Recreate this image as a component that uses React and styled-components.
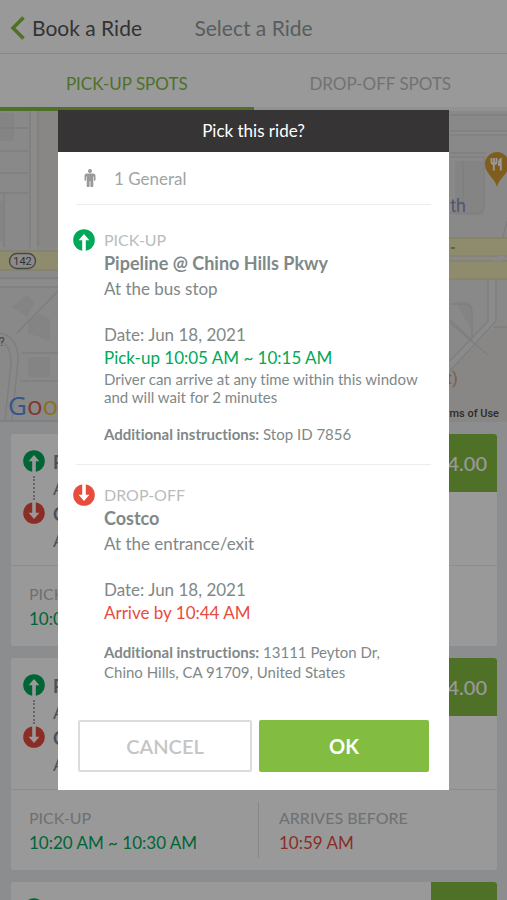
import React from 'react';
import styled, { createGlobalStyle } from 'styled-components';

const rides = [
  { id: 1, pickup: '10:05 AM ~ 10:15 AM', arrives: '10:44 AM' },
  { id: 2, pickup: '10:20 AM ~ 10:30 AM', arrives: '10:59 AM' },
  { id: 3, pickup: '10:35 AM ~ 10:45 AM', arrives: '11:14 AM' },
];

const App = () => {
  return (
    <>
      <GlobalStyle />
      <Page>
        <Header>
          <BackLink href='#book'>
            <ChevronIcon />
            Book a Ride
          </BackLink>
          <PageTitle>Select a Ride</PageTitle>
        </Header>
        <Tabs>
          <Tab type='button' $active>
            PICK-UP SPOTS
          </Tab>
          <Tab type='button'>DROP-OFF SPOTS</Tab>
        </Tabs>
        <Map />
        <RideList>
          {rides.map((ride) => (
            <RideCard key={ride.id} ride={ride} />
          ))}
        </RideList>
      </Page>
      <Overlay>
        <ConfirmDialog />
      </Overlay>
    </>
  );
};

const RideCard = ({ ride }) => (
  <StyleCard>
    <Route>
      <RouteIcons>
        <UpIcon />
        <Dots />
        <DownIcon />
      </RouteIcons>
      <RouteText>
        <strong>Pipeline @ Chino Hills Pkwy</strong>
        <span>At the bus stop</span>
        <strong>Costco</strong>
        <span>At the entrance/exit</span>
      </RouteText>
      <Price>$4.00</Price>
    </Route>
    <Times>
      <TimeCell>
        <CardLabel>PICK-UP</CardLabel>
        <Time $color='#00a859'>{ride.pickup}</Time>
      </TimeCell>
      <TimeCell>
        <CardLabel>ARRIVES BEFORE</CardLabel>
        <Time $color='#e74c3c'>{ride.arrives}</Time>
      </TimeCell>
    </Times>
  </StyleCard>
);

const ConfirmDialog = () => (
  <Dialog role='dialog' aria-modal='true' aria-labelledby='dialog-title'>
    <DialogTitle id='dialog-title'>Pick this ride?</DialogTitle>
    <DialogBody>
      <Passengers>
        <ManIcon />
        1 General
      </Passengers>
      <Divider />
      <Stop>
        <UpIcon />
        <div>
          <Label>PICK-UP</Label>
          <StopName>Pipeline @ Chino Hills Pkwy</StopName>
          <Place>At the bus stop</Place>
          <DateLine>Date: Jun 18, 2021</DateLine>
          <StopTime $color='#00a859'>Pick-up 10:05 AM ~ 10:15 AM</StopTime>
          <Note>
            Driver can arrive at any time within this window and will wait for 2
            minutes
          </Note>
          <Instructions>
            <strong>Additional instructions:</strong> Stop ID 7856
          </Instructions>
        </div>
      </Stop>
      <Divider />
      <Stop>
        <DownIcon />
        <div>
          <Label>DROP-OFF</Label>
          <StopName>Costco</StopName>
          <Place>At the entrance/exit</Place>
          <DateLine>Date: Jun 18, 2021</DateLine>
          <StopTime $color='#e74c3c'>Arrive by 10:44 AM</StopTime>
          <Instructions>
            <strong>Additional instructions:</strong> 13111 Peyton Dr, Chino
            Hills, CA 91709, United States
          </Instructions>
        </div>
      </Stop>
    </DialogBody>
    <Actions>
      <Button type='button'>CANCEL</Button>
      <Button type='button' $primary>
        OK
      </Button>
    </Actions>
  </Dialog>
);

// Icons
const ChevronIcon = () => (
  <svg width='16' height='24' viewBox='0 0 16 24' aria-hidden='true'>
    <path d='M13.5 1.5L3 12l10.5 10.5' fill='none' stroke='#82bc41' strokeWidth='3.6' />
  </svg>
);

const UpIcon = () => (
  <svg width='22' height='22' viewBox='0 0 22 22' aria-hidden='true'>
    <circle cx='11' cy='11' r='10.8' fill='#00a859' />
    <path d='M11 5l5.4 6.2h-3.6V22H9.2V11.2H5.6z' fill='#fff' />
  </svg>
);

const DownIcon = () => (
  <svg width='22' height='22' viewBox='0 0 22 22' aria-hidden='true'>
    <circle cx='11' cy='11' r='10.8' fill='#e74c3c' />
    <path d='M11 17l5.4-6.2h-3.6V0H9.2v10.8H5.6z' fill='#fff' />
  </svg>
);

const ManIcon = () => (
  <svg width='12' height='18' viewBox='0 0 12 18' fill='#999' aria-hidden='true'>
    <circle cx='6' cy='2' r='2' />
    <path d='M3 4.5h6a2.5 2.5 0 0 1 2.5 2.5v4a.8.8 0 0 1-1.6 0V7.5h-.6V17a.9.9 0 0 1-.9.9H7.3a.9.9 0 0 1-.9-.9v-5h-.8v5a.9.9 0 0 1-.9.9H3.6a.9.9 0 0 1-.9-.9V7.5h-.6V11a.8.8 0 0 1-1.6 0V7A2.5 2.5 0 0 1 3 4.5z' />
  </svg>
);

const Map = () => (
  <StyleMap>
    <svg viewBox='0 0 507 311' preserveAspectRatio='xMidYMid slice' aria-hidden='true'>
      <rect width='507' height='311' fill='#e4e4e4' />
      {/* blocks */}
      <g fill='#dddddd'>
        <path d='M0 2h14v28H0zM0 90h4v40H0zM12 196l15-12 8 8-8 14zM28 212l10-10 12 6v22l-22-8zM28 246h22v20H28z' />
        <path d='M455 50h28v54h-28zM455 190l16 2v26z' />
      </g>
      <g fill='#e4e1de'>
        <path d='M38 0h20v136H38z' />
        <path d='M450 262l46-48h11v97h-57z' />
      </g>
      <g fill='none' stroke='#e8e8e8' strokeWidth='6'>
        <path d='M0 172h58M34 0v140M450 22h57M492 168v44l-42 42' />
      </g>
      {/* lot lines */}
      <g fill='none' stroke='#d3d3d3' strokeWidth='1.4'>
        <path d='M0 17h28M0 40h28M0 62h28M0 82h28M4 82v54M30 0v136M38 0v136' />
        <path d='M0 167h58M0 176h58M17 222l41-42M22 242h36M20 270h38' />
        <path d='M0 222q18 4 18 26l-6 62M0 230q11 4 11 22l-6 58M0 310h58' />
        <path d='M450 4h57M450 20h57M450 24h57M450 42h36M450 46h34v50q0 6-6 6h-28M463 50v46M507 110l-4 16' />
        <path d='M450 193h14q8 0 8 8v28l-22-20M488 168v42l-38 40M496 168v42l-46 50M450 212l38 32M507 216h-14' />
      </g>
      {/* main road */}
      <g fill='#eee9b8' stroke='#d8d2a4' strokeWidth='1'>
        <path d='M-2 140h240v19H-2z' />
        <path d='M440 127h70v18h-70zM440 150h70v18h-70z' />
      </g>
      <path d='M492 150l6-5h8l-5 5z' fill='#e4e4e4' />
      <path d='M451 137h4' stroke='#8a8a70' strokeWidth='1.5' />
      <rect x='9.5' y='142.5' width='26' height='15' rx='7.5' fill='#e8e8e8' stroke='#777' strokeWidth='1.4' />
      <text x='22.5' y='154' textAnchor='middle' fontFamily='Roboto' fontSize='11' fill='#555'>
        142
      </text>
      <text x='-1' y='235' fontFamily='Roboto' fontSize='12' fill='#777'>
        ?
      </text>
      <text x='466' y='101' textAnchor='end' fontFamily='Roboto' fontSize='18' fill='#8791b5'>
        Faith
      </text>
      <text x='458' y='273' textAnchor='end' fontFamily='Roboto' fontSize='17' fill='#d39a7c'>
        (Market)
      </text>
      {/* restaurant pin */}
      <path d='M497 76c-2-9-12-13-12-23a12 12 0 0 1 24 0c0 10-10 14-12 23z' fill='#d39c35' />
      <path d='M491.500 47v4q0 2 2.300 2v6.500M494 47v6M496.500 47v4q0 2-2.600 2M500.800 59.500V48q-2 1-2 6h2' fill='none' stroke='#fff' strokeWidth='1.8' />
    </svg>
    <Google>
      <span>G</span>
      <span>o</span>
      <span>o</span>
      <span>g</span>
      <span>l</span>
      <span>e</span>
    </Google>
    <Terms href='#terms'>Terms of Use</Terms>
  </StyleMap>
);

const GlobalStyle = createGlobalStyle`
  * {
    box-sizing: border-box;
    margin: 0;
  }
  body {
    font-family: Lato, 'Open Sans', sans-serif;
    font-variant-ligatures: none;
    color: #7f8888;
  }
  button {
    font-family: inherit;
    cursor: pointer;
  }
  a {
    color: inherit;
    text-decoration: none;
  }
`;

const Page = styled.div`
  height: 100vh;
  overflow: hidden;
  background: #e8ebef;
`;

const Header = styled.header`
  display: grid;
  grid-template-columns: 1fr auto 1fr;
  align-items: center;
  height: 54px;
  padding: 2px 10px 0;
  background: #fff;
  border-bottom: 1px solid #e2e2e4;
`;

const BackLink = styled.a`
  display: flex;
  align-items: center;
  gap: 6px;
  font-size: 21px;
  color: #555;
`;

const PageTitle = styled.h1`
  font-size: 21px;
  font-weight: 400;
  color: #939c9c;
`;

const Tabs = styled.div`
  display: flex;
  height: 57px;
  background: #fff;
`;

const Tab = styled.button`
  flex: 1;
  padding: 6px 0 0;
  border: 0;
  border-bottom: 4px solid ${(props) => (props.$active ? '#82bc41' : '#f4f4f5')};
  background: none;
  font-size: 17px;
  color: ${(props) => (props.$active ? '#82bc41' : '#bcbfc0')};
`;

const StyleMap = styled.div`
  position: relative;
  height: 311px;
  svg {
    display: block;
    width: 100%;
    height: 100%;
  }
`;

const Google = styled.div`
  position: absolute;
  left: 8px;
  bottom: 1px;
  font-family: 'Open Sans', sans-serif;
  font-size: 26px;
  line-height: 32px;
  font-weight: 500;
  color: #5a8fe8;
  span:nth-child(2),
  span:nth-child(6) {
    color: #dd5c50;
  }
  span:nth-child(3) {
    color: #e8bd3a;
  }
  span:nth-child(5) {
    color: #4fae68;
  }
`;

const Terms = styled.a`
  position: absolute;
  right: 8px;
  bottom: 1px;
  font-family: Roboto, sans-serif;
  font-size: 11px;
  line-height: 14px;
  font-weight: 500;
  color: #4a4a4a;
`;

const RideList = styled.main`
  display: flex;
  flex-direction: column;
  gap: 12px;
  padding: 12px 10px 12px 11px;
`;

const StyleCard = styled.article`
  flex: none;
  border-radius: 3px;
  background: #fff;
  overflow: hidden;
`;

const Route = styled.div`
  display: flex;
  height: 132px;
  padding-left: 12px;
  border-bottom: 1px solid #ececee;
`;

const RouteIcons = styled.div`
  display: flex;
  flex-direction: column;
  align-items: center;
  padding-top: 16px;
`;

const Dots = styled.i`
  height: 24px;
  margin: 4px 0 2px;
  border-left: 2px dotted #a8adad;
`;

const RouteText = styled.div`
  flex: 1;
  display: flex;
  flex-direction: column;
  padding: 15px 0 0 8px;
  font-size: 18px;
  line-height: 26px;
`;

const Price = styled.div`
  width: 66px;
  height: 58px;
  padding-right: 10px;
  background: #82bc41;
  color: #fff;
  font-size: 20px;
  line-height: 58px;
  font-weight: 500;
  text-align: right;
`;

const Times = styled.div`
  display: flex;
  padding: 12px 0;
`;

const TimeCell = styled.div`
  flex: 1 1 0;
  padding: 4px 0 2px 18px;
  & + & {
    flex: 0 0 239px;
    padding-left: 20px;
    border-left: 1px solid #e2e4e5;
  }
`;

const CardLabel = styled.div`
  font-size: 16px;
  line-height: 24px;
  color: #b8bbbc;
`;

const Time = styled.div`
  font-size: 17px;
  line-height: 26px;
  color: ${(props) => props.$color};
`;

// Dialog
const Overlay = styled.div`
  position: fixed;
  inset: 0;
  display: flex;
  align-items: center;
  justify-content: center;
  padding: 0 58px;
  background: rgba(0, 0, 0, 0.4);
`;

const Dialog = styled.section`
  flex: 1;
  max-width: 480px;
  background: #fff;
`;

const DialogTitle = styled.h2`
  background: #373435;
  color: #fff;
  font-size: 17px;
  line-height: 42px;
  font-weight: 400;
  text-align: center;
`;

const DialogBody = styled.div`
  padding: 0 15px;
`;

const Passengers = styled.div`
  display: flex;
  align-items: center;
  gap: 18px;
  height: 52px;
  padding-left: 11px;
  font-size: 17px;
  color: #a0a5a5;
`;

const Divider = styled.hr`
  margin: 0 3px;
  border: 0;
  border-top: 1px solid #ececec;
`;

const Stop = styled.div`
  display: flex;
  align-items: flex-start;
  gap: 9px;
  padding: 19px 0 20px;
  ${Passengers} + ${Divider} + & {
    padding-top: 24px;
  }
  svg {
    flex: none;
  }
`;

const Label = styled.div`
  font-size: 16px;
  line-height: 22px;
  color: #b8bcbd;
`;

const StopName = styled.h3`
  font-size: 18px;
  line-height: 24px;
  font-weight: 700;
`;

const Place = styled.p`
  font-size: 17px;
  line-height: 28px;
`;

const DateLine = styled.p`
  margin-top: 20px;
  font-size: 17px;
  line-height: 23px;
`;

const StopTime = styled.p`
  font-size: 17px;
  line-height: 24px;
  color: ${(props) => props.$color};
`;

const Note = styled.p`
  padding-bottom: 1px;
  font-size: 15px;
  line-height: 18px;
`;

const Instructions = styled.p`
  margin-top: 17px;
  padding-right: 24px;
  font-size: 15px;
  line-height: 20px;
`;

const Actions = styled.div`
  display: flex;
  gap: 7px;
  padding: 18px 20px;
`;

const Button = styled.button`
  flex: 1;
  height: 52px;
  border: ${(props) => (props.$primary ? '0' : '2px solid #dcdcdc')};
  border-radius: 2px;
  background: ${(props) => (props.$primary ? '#82bc41' : '#fff')};
  color: ${(props) => (props.$primary ? '#fff' : '#c4c6c6')};
  font-size: 20px;
  font-weight: ${(props) => (props.$primary ? '700' : '600')};
`;

export default App;
